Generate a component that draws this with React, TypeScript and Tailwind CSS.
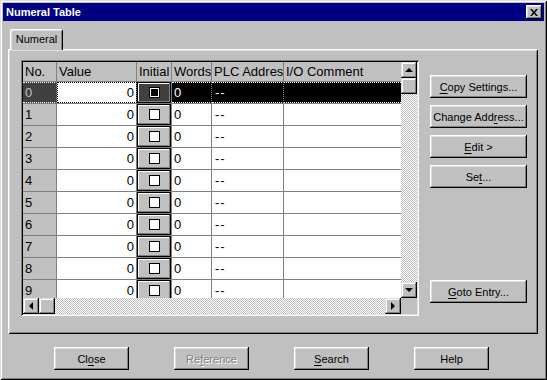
import React from "react";

const rows = [0, 1, 2, 3, 4, 5, 6, 7, 8, 9];

function Btn({ children, w, disabled }: { children: React.ReactNode; w: string; disabled?: boolean }) {
  return (
    <div
      className={`${w} h-[23px] flex items-center justify-center bg-[#c0c0c0] text-[11px] shadow-[inset_-1px_-1px_#000,inset_1px_1px_#fff,inset_-2px_-2px_#808080,inset_2px_2px_#dfdfdf] ${
        disabled ? "text-[#808080] [text-shadow:1px_1px_#fff]" : "text-black"
      }`}
    >
      <span className="pt-[1px]">{children}</span>
    </div>
  );
}

function U({ children }: { children: React.ReactNode }) {
  return <span className="underline underline-offset-2">{children}</span>;
}

function Arrow({ dir }: { dir: "up" | "down" | "left" | "right" }) {
  const pts = {
    up: "4,2 0,6 8,6",
    down: "0,2 8,2 4,6",
    left: "6,0 6,8 2,4",
    right: "2,0 2,8 6,4",
  }[dir];
  return (
    <div className="w-[16px] h-[16px] shrink-0 flex items-center justify-center bg-[#c0c0c0] shadow-[inset_-1px_-1px_#000,inset_1px_1px_#dfdfdf,inset_-2px_-2px_#808080,inset_2px_2px_#fff]">
      <svg width="8" height="8" viewBox="0 0 8 8">
        <polygon points={pts} fill="#000" />
      </svg>
    </div>
  );
}

function Thumb() {
  return (
    <div className="w-[16px] h-[16px] shrink-0 bg-[#c0c0c0] shadow-[inset_-1px_-1px_#000,inset_1px_1px_#dfdfdf,inset_-2px_-2px_#808080,inset_2px_2px_#fff]" />
  );
}

function Row({ n }: { n: number }) {
  const sel = n === 0;
  return (
    <div className="flex h-[22px] shrink-0 border-b border-[#808080] text-[13px]">
      <div
        className={`w-[34px] shrink-0 border-r border-[#808080] pl-[2px] flex items-center ${
          sel ? "bg-[#404040] text-[#c0c0c0] border-y border-dotted border-y-white" : "bg-[#c0c0c0]"
        }`}
      >
        {n}
      </div>
      <div
        className={`w-[80px] shrink-0 border-r border-[#808080] bg-white flex items-center justify-end pr-[2px] ${
          sel ? "outline outline-1 outline-dotted outline-black -outline-offset-1" : ""
        }`}
      >
        0
      </div>
      <div className="w-[35px] shrink-0 border-r border-[#808080] flex">
        <div
          className={`flex-1 flex items-center justify-center shadow-[inset_-1px_-1px_#000,inset_1px_1px_#000,inset_-2px_-2px_#808080,inset_2px_2px_#fff] ${
            sel ? "bg-[#404040]" : "bg-[#c0c0c0]"
          }`}
        >
          <div className="w-[11px] h-[11px] border border-black bg-white flex items-center justify-center">
            {sel && <div className="w-[7px] h-[7px] bg-black" />}
          </div>
        </div>
      </div>
      <div
        className={`w-[40px] shrink-0 border-r border-[#808080] pl-[2px] flex items-center ${
          sel ? "bg-black text-white border-y border-dotted border-y-white" : "bg-white"
        }`}
      >
        0
      </div>
      <div
        className={`w-[72px] shrink-0 border-r border-[#808080] pl-[3px] flex items-center tracking-[1px] ${
          sel ? "bg-black text-white border-y border-dotted border-y-white" : "bg-white"
        }`}
      >
        --
      </div>
      <div
        className={`w-[117px] shrink-0 ${
          sel ? "bg-black border-y border-dotted border-y-white" : "bg-white"
        }`}
      />
    </div>
  );
}

export default function App() {
  const head = [
    { t: "No.", w: "w-[34px]" },
    { t: "Value", w: "w-[80px]" },
    { t: "Initial", w: "w-[35px]" },
    { t: "Words", w: "w-[40px]" },
    { t: "PLC Addres", w: "w-[72px]" },
    { t: "I/O Comment", w: "w-[117px]" },
  ];

  return (
    <div className="w-[547px] h-[380px] bg-[#c0c0c0] p-[3px] flex flex-col font-['Liberation_Sans',Arial,sans-serif] text-black shadow-[inset_1px_1px_#dfdfdf,inset_-1px_-1px_#000,inset_2px_2px_#fff,inset_-2px_-2px_#808080] overflow-hidden">
      {/* Title bar */}
      <div className="h-[18px] shrink-0 bg-[#000080] flex items-center justify-between pl-[3px] pr-[2px]">
        <span className="text-white font-bold text-[11px]">Numeral Table</span>
        <div className="w-[16px] h-[14px] bg-[#c0c0c0] flex items-center justify-center shadow-[inset_-1px_-1px_#000,inset_1px_1px_#fff,inset_-2px_-2px_#808080,inset_2px_2px_#dfdfdf]">
          <svg width="8" height="7" viewBox="0 0 8 7">
            <path d="M0 0h2l2 2.5L6 0h2L5 3.5 8 7H6L4 4.5 2 7H0l3-3.5z" fill="#000" />
          </svg>
        </div>
      </div>

      <div className="flex-1 flex flex-col px-[5px]">
        {/* Tab */}
        <div className="mt-[8px] pl-[2px] flex">
          <div className="relative z-10 -mb-[1px] w-[53px] h-[21px] bg-[#c0c0c0] rounded-t-[2px] flex items-center justify-center text-[11px] shadow-[inset_1px_1px_#fff,inset_-1px_0_#000,inset_2px_2px_#dfdfdf,inset_-2px_0_#808080]">
            Numeral
          </div>
        </div>

        {/* Panel */}
        <div className="h-[285px] w-[530px] shrink-0 flex pt-[11px] pl-[13px] shadow-[inset_1px_1px_#fff,inset_-1px_-1px_#000,inset_2px_2px_#dfdfdf,inset_-2px_-2px_#808080]">
          {/* Grid */}
          <div className="w-[398px] h-[256px] p-[2px] flex flex-col shadow-[inset_1px_1px_#808080,inset_-1px_-1px_#fff,inset_2px_2px_#000,inset_-2px_-2px_#dfdfdf]">
            <div className="flex h-[236px]">
              <div className="flex-1 overflow-hidden flex flex-col">
                <div className="flex h-[20px] shrink-0 bg-[#c0c0c0] border-b border-[#808080] text-[13px]">
                  {head.map((h, i) => (
                    <div
                      key={h.t}
                      className={`${h.w} shrink-0 ${i < 5 ? "border-r border-[#808080]" : ""} pl-[2px] flex items-center overflow-hidden whitespace-nowrap`}
                    >
                      {h.t}
                    </div>
                  ))}
                </div>
                {rows.map((n) => (
                  <Row key={n} n={n} />
                ))}
              </div>
              <div className="w-[16px] flex flex-col">
                <Arrow dir="up" />
                <Thumb />
                <div className="flex-1 bg-[repeating-conic-gradient(#c0c0c0_0_25%,#fff_0_50%)] bg-[length:2px_2px]" />
                <Arrow dir="down" />
              </div>
            </div>
            <div className="flex h-[16px]">
              <Arrow dir="left" />
              <Thumb />
              <div className="flex-1 bg-[repeating-conic-gradient(#c0c0c0_0_25%,#fff_0_50%)] bg-[length:2px_2px]" />
              <Arrow dir="right" />
              <div className="w-[16px] bg-[#c0c0c0]" />
            </div>
          </div>

          {/* Right buttons */}
          <div className="ml-[11px] pt-[15px] flex flex-col gap-[7px]">
            <Btn w="w-[97px]">
              <U>C</U>opy Settings...
            </Btn>
            <Btn w="w-[97px]">
              Change Add<U>r</U>ess...
            </Btn>
            <Btn w="w-[97px]">
              <U>E</U>dit &gt;
            </Btn>
            <Btn w="w-[97px]">
              Se<U>t</U>...
            </Btn>
            <div className="mt-[85px]">
              <Btn w="w-[97px]">
                <U>G</U>oto Entry...
              </Btn>
            </div>
          </div>
        </div>

        {/* Bottom buttons */}
        <div className="mt-[13px] pl-[46px] flex gap-[45px]">
          <Btn w="w-[75px]">
            Cl<U>o</U>se
          </Btn>
          <Btn w="w-[75px]" disabled>
            Re<U>f</U>erence
          </Btn>
          <Btn w="w-[75px]">
            <U>S</U>earch
          </Btn>
          <Btn w="w-[75px]">Help</Btn>
        </div>
      </div>
    </div>
  );
}
